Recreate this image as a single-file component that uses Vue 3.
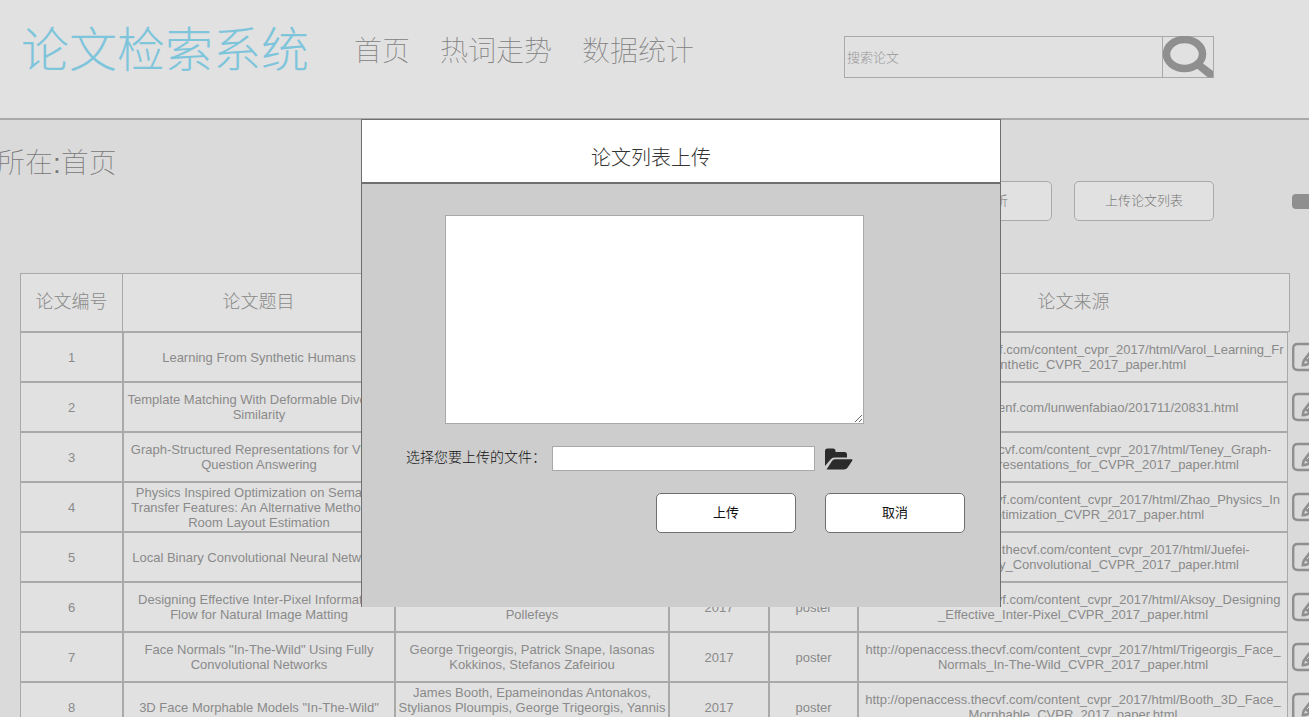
<script setup>
import { ref } from 'vue'

const keyword = ref('')
const paperList = ref('')
const fileName = ref('')

const base = 'http://openaccess.thecvf.com/content_cvpr_2017/html/'

const columns = ['论文编号', '论文题目', '论文作者', '发表年份', '类型']

const papers = [
  {
    title: 'Learning From Synthetic Humans',
    authors: 'Gul Varol, Javier Romero, Xavier Martin,\nNaureen Mahmood, Michael J. Black',
    source: base + 'Varol_Learning_Fr\nom_Synthetic_CVPR_2017_paper.html',
  },
  {
    title: 'Template Matching With Deformable Diversity\nSimilarity',
    authors: 'Itamar Talmi, Roey Mechrez, Lihi\nZelnik-Manor',
    source: 'http://www.lunwenf.com/lunwenfabiao/201711/20831.html',
  },
  {
    title: 'Graph-Structured Representations for Visual\nQuestion Answering',
    authors: 'Damien Teney, Lingqiao Liu, Anton van\nden Hengel',
    source: base + 'Teney_Graph-\nStructured_Representations_for_CVPR_2017_paper.html',
  },
  {
    title: 'Physics Inspired Optimization on Semantic\nTransfer Features: An Alternative Method for\nRoom Layout Estimation',
    authors: 'Hao Zhao, Ming Lu, Anbang Yao, Yiwen\nGuo, Yurong Chen, Li Zhang',
    source: base + 'Zhao_Physics_In\nspired_Optimization_CVPR_2017_paper.html',
  },
  {
    title: 'Local Binary Convolutional Neural Networks',
    authors: 'Felix Juefei-Xu, Vishnu Naresh Boddeti,\nMarios Savvides',
    source: base + 'Juefei-\nXu_Local_Binary_Convolutional_CVPR_2017_paper.html',
  },
  {
    title: 'Designing Effective Inter-Pixel Information\nFlow for Natural Image Matting',
    authors: 'Yagiz Aksoy, Tunc Ozan Aydin, Marc\nPollefeys',
    source: base + 'Aksoy_Designing\n_Effective_Inter-Pixel_CVPR_2017_paper.html',
  },
  {
    title: 'Face Normals "In-The-Wild" Using Fully\nConvolutional Networks',
    authors: 'George Trigeorgis, Patrick Snape, Iasonas\nKokkinos, Stefanos Zafeiriou',
    source: base + 'Trigeorgis_Face_\nNormals_In-The-Wild_CVPR_2017_paper.html',
  },
  {
    title: '3D Face Morphable Models "In-The-Wild"',
    authors: 'James Booth, Epameinondas Antonakos,\nStylianos Ploumpis, George Trigeorgis, Yannis\nPanagakis, Stefanos Zafeiriou',
    source: base + 'Booth_3D_Face_\nMorphable_CVPR_2017_paper.html',
  },
]
</script>

<template>
  <div class="page">
    <header class="top">
      <h1 class="logo">论文检索系统</h1>
      <nav class="nav">
        <a href="#home">首页</a>
        <a href="#trend">热词走势</a>
        <a href="#stats">数据统计</a>
      </nav>
      <form class="search" @submit.prevent>
        <input v-model="keyword" type="text" placeholder="搜索论文" aria-label="搜索论文" />
        <button type="submit" aria-label="搜索">
          <svg viewBox="0 0 52 42" width="52" height="42" aria-hidden="true">
            <ellipse cx="22.500" cy="18" rx="18" ry="14.500" fill="none" stroke="#8f8f8f" stroke-width="7.500" />
            <path d="M33 31 L39 26 L51 35 L51 41.500 L46 41.500 Z" fill="#8f8f8f" />
          </svg>
        </button>
      </form>
    </header>

    <main class="content">
      <p class="crumb">所在:首页</p>
      <div class="actions">
        <button type="button" class="action">热词分析</button>
        <button type="button" class="action">上传论文列表</button>
        <button type="button" class="add" aria-label="添加">
          <svg viewBox="0 0 50 50" width="50" height="50" aria-hidden="true">
            <rect x="0" y="18" width="50" height="15" rx="4" fill="#8f8f8f" />
            <rect x="18" y="0" width="15" height="50" rx="4" fill="#8f8f8f" />
          </svg>
        </button>
      </div>

      <table class="papers">
        <colgroup>
          <col class="c-id" />
          <col class="c-title" />
          <col class="c-author" />
          <col class="c-year" />
          <col class="c-type" />
          <col />
          <col class="c-edge" />
          <col class="c-edit" />
        </colgroup>
        <thead>
          <tr>
            <th v-for="name in columns" :key="name" scope="col">{{ name }}</th>
            <th scope="col" colspan="2">论文来源</th>
            <td class="blank"></td>
          </tr>
        </thead>
        <tbody>
          <tr v-for="(paper, i) in papers" :key="paper.title">
            <td>{{ i + 1 }}</td>
            <td>{{ paper.title }}</td>
            <td>{{ paper.authors }}</td>
            <td>2017</td>
            <td>poster</td>
            <td>{{ paper.source }}</td>
            <td class="edit" colspan="2">
              <button type="button" :aria-label="'编辑 ' + (i + 1)">
                <svg viewBox="0 0 34 30" width="34" height="30" aria-hidden="true">
                  <path d="M24 2 H6 Q1.200 2 1.200 6.500 V23.500 Q1.200 28 6 28 H24 Q28 28 28 23.500 V19" fill="none" stroke="#8f8f8f" stroke-width="2.400" />
                  <path d="M9.500 24.500 Q9.300 20.500 11 17.500 L18 8.500 L25 2 L31 8 L20 21 Q16 24.500 9.500 24.500 Z" fill="#8f8f8f" />
                  <path d="M12 21.500 L13.500 18.500 L16 21 Z" fill="#dadada" />
                  <path d="M15 17 L24 7" stroke="#dadada" stroke-width="1" />
                </svg>
              </button>
            </td>
          </tr>
        </tbody>
      </table>
    </main>

    <div class="overlay">
      <section class="dialog" role="dialog" aria-labelledby="dialog-title">
        <h2 id="dialog-title" class="dialog-title">论文列表上传</h2>
        <form class="dialog-body" @submit.prevent>
          <textarea v-model="paperList" aria-label="论文列表"></textarea>
          <div class="file-row">
            <label for="file-name">选择您要上传的文件：</label>
            <input id="file-name" v-model="fileName" type="text" />
            <button type="button" class="browse" aria-label="浏览">
              <svg viewBox="0 0 28 22" width="28" height="22" aria-hidden="true">
                <path d="M0 18 V3 Q0 0.500 2.500 0.500 H8 Q10.500 0.500 10.500 3 V4 H19.500 Q22 4 22 6.500 V9.500 H9.500 Q7 9.500 5.500 11.500 Z" fill="#2b2b2b" />
                <path d="M1.500 21.500 L7 13 Q8 11.300 10 11.300 H26.500 Q28 11.300 27.200 12.700 L22.500 19.800 Q21.300 21.500 19 21.500 Z" fill="#2b2b2b" />
              </svg>
            </button>
          </div>
          <div class="dialog-actions">
            <button type="submit">上传</button>
            <button type="button">取消</button>
          </div>
        </form>
      </section>
    </div>
  </div>
</template>

<style>
body {
  margin: 0;
}
</style>

<style scoped>
.page {
  position: relative;
  height: 100vh;
  overflow: hidden;
  background: #dadada;
  color: #8a8a8a;
  font-family: "Liberation Sans", "Noto Sans CJK SC", sans-serif;
  font-size: 13px;
}

button {
  padding: 0;
  font: inherit;
  color: inherit;
}

input,
textarea {
  box-sizing: border-box;
  border-radius: 0;
  font: inherit;
  outline: none;
}

svg {
  display: block;
}

.top {
  display: flex;
  box-sizing: border-box;
  height: 120px;
  padding: 0 95px 0 21px;
  background: #e1e1e1;
  border-bottom: 2px solid #a9a9a9;
}

.logo {
  margin: 0;
  padding-top: 15px;
  color: #7ec5dc;
  font-size: 48px;
  font-weight: 300;
  line-height: 72px;
  white-space: nowrap;
}

.nav {
  display: flex;
  gap: 30px;
  margin-left: 45px;
  padding-top: 32px;
  font-size: 28px;
  font-weight: 100;
  line-height: 40px;
  white-space: nowrap;
}

.nav a {
  color: #808080;
  text-decoration: none;
}

.search {
  display: flex;
  width: 370px;
  height: 42px;
  margin: 36px 0 0 auto;
}

.search input {
  flex: 1;
  min-width: 0;
  padding: 0 2px;
  background: #e1e1e1;
  border: 1px solid #a9a9a9;
  border-right: 0;
}

.search input::placeholder {
  color: #989898;
  font-weight: 300;
  opacity: 1;
}

.search button {
  display: flex;
  box-sizing: border-box;
  width: 52px;
  align-items: center;
  justify-content: center;
  background: #e1e1e1;
  border: 1px solid #a9a9a9;
}

.search svg {
  flex: none;
}

.crumb {
  margin: 0 0 0 -3px;
  padding-top: 24px;
  color: #777;
  font-size: 28px;
  font-weight: 100;
  line-height: 40px;
}

.actions {
  display: flex;
  justify-content: flex-end;
  gap: 22px;
  height: 40px;
  margin-right: 95px;
  margin-top: -3px;
}

.action {
  box-sizing: border-box;
  width: 140px;
  height: 40px;
  padding-bottom: 4px;
  background: #e1e1e1;
  border: 1px solid #a9a9a9;
  border-radius: 5px;
  color: #777;
  font-weight: 300;
}

.add {
  display: flex;
  height: 40px;
  margin-left: 56px;
  margin-right: -128px;
  align-items: center;
  background: none;
  border: 0;
  clip-path: inset(0);
}

.papers {
  width: 100%;
  margin: 52px 0 0 20px;
  table-layout: fixed;
  border-collapse: separate;
  border-spacing: 0;
  text-align: center;
  line-height: 15px;
}

.c-id { width: 103px; }
.c-title { width: 272px; }
.c-author { width: 274px; }
.c-year { width: 100px; }
.c-type { width: 89px; }
.c-edge { width: 2px; }
.c-edit { width: 39px; }

.papers th {
  box-sizing: border-box;
  height: 59px;
  padding: 0;
  background: #e1e1e1;
  border: 1px solid #a9a9a9;
  border-left: 0;
  font-size: 18px;
  font-weight: 300;
}

.papers th:first-child {
  border-left: 1px solid #a9a9a9;
}

.papers td {
  box-sizing: border-box;
  height: 50px;
  padding: 0;
  background: #e1e1e1;
  border: 1px solid #a9a9a9;
  white-space: pre;
}

.papers .blank,
.papers .edit {
  background: none;
  border: 0;
}

.edit button {
  display: block;
  margin-left: 4px;
  background: none;
  border: 0;
}

.overlay {
  position: absolute;
  top: 119px;
  left: 53px;
  right: 0;
  display: flex;
  justify-content: center;
}

.dialog {
  box-sizing: border-box;
  width: 640px;
  height: 488px;
  background: #cdcdcd;
  border: 1px solid #6f6f6f;
  border-bottom: 0;
  color: #111;
}

.dialog-title {
  margin: 0;
  padding: 23px 60px 9px 0;
  background: #fff;
  border-bottom: 2px solid #6f6f6f;
  color: #333;
  font-size: 20px;
  font-weight: 300;
  line-height: 30px;
  text-align: center;
}

.dialog-body {
  display: flex;
  flex-direction: column;
  padding: 31px 35px 0 44px;
}

.dialog textarea {
  width: 419px;
  height: 209px;
  margin-left: 39px;
  background: #fff;
  border: 1px solid #a9a9a9;
}

.file-row {
  display: flex;
  align-items: center;
  margin-top: 22px;
  font-size: 14px;
}

.file-row label {
  width: 146px;
  padding-bottom: 4px;
  font-weight: 300;
  line-height: 20px;
  white-space: nowrap;
}

.file-row input {
  width: 263px;
  height: 25px;
  border: 1px solid #a9a9a9;
}

.browse {
  margin-left: 10px;
  background: none;
  border: 0;
}

.dialog-actions {
  display: flex;
  justify-content: flex-end;
  gap: 29px;
  margin-top: 22px;
}

.dialog-actions button {
  box-sizing: border-box;
  width: 140px;
  height: 40px;
  padding-bottom: 4px;
  background: #fff;
  border: 1px solid #6f6f6f;
  border-radius: 5px;
}
</style>
